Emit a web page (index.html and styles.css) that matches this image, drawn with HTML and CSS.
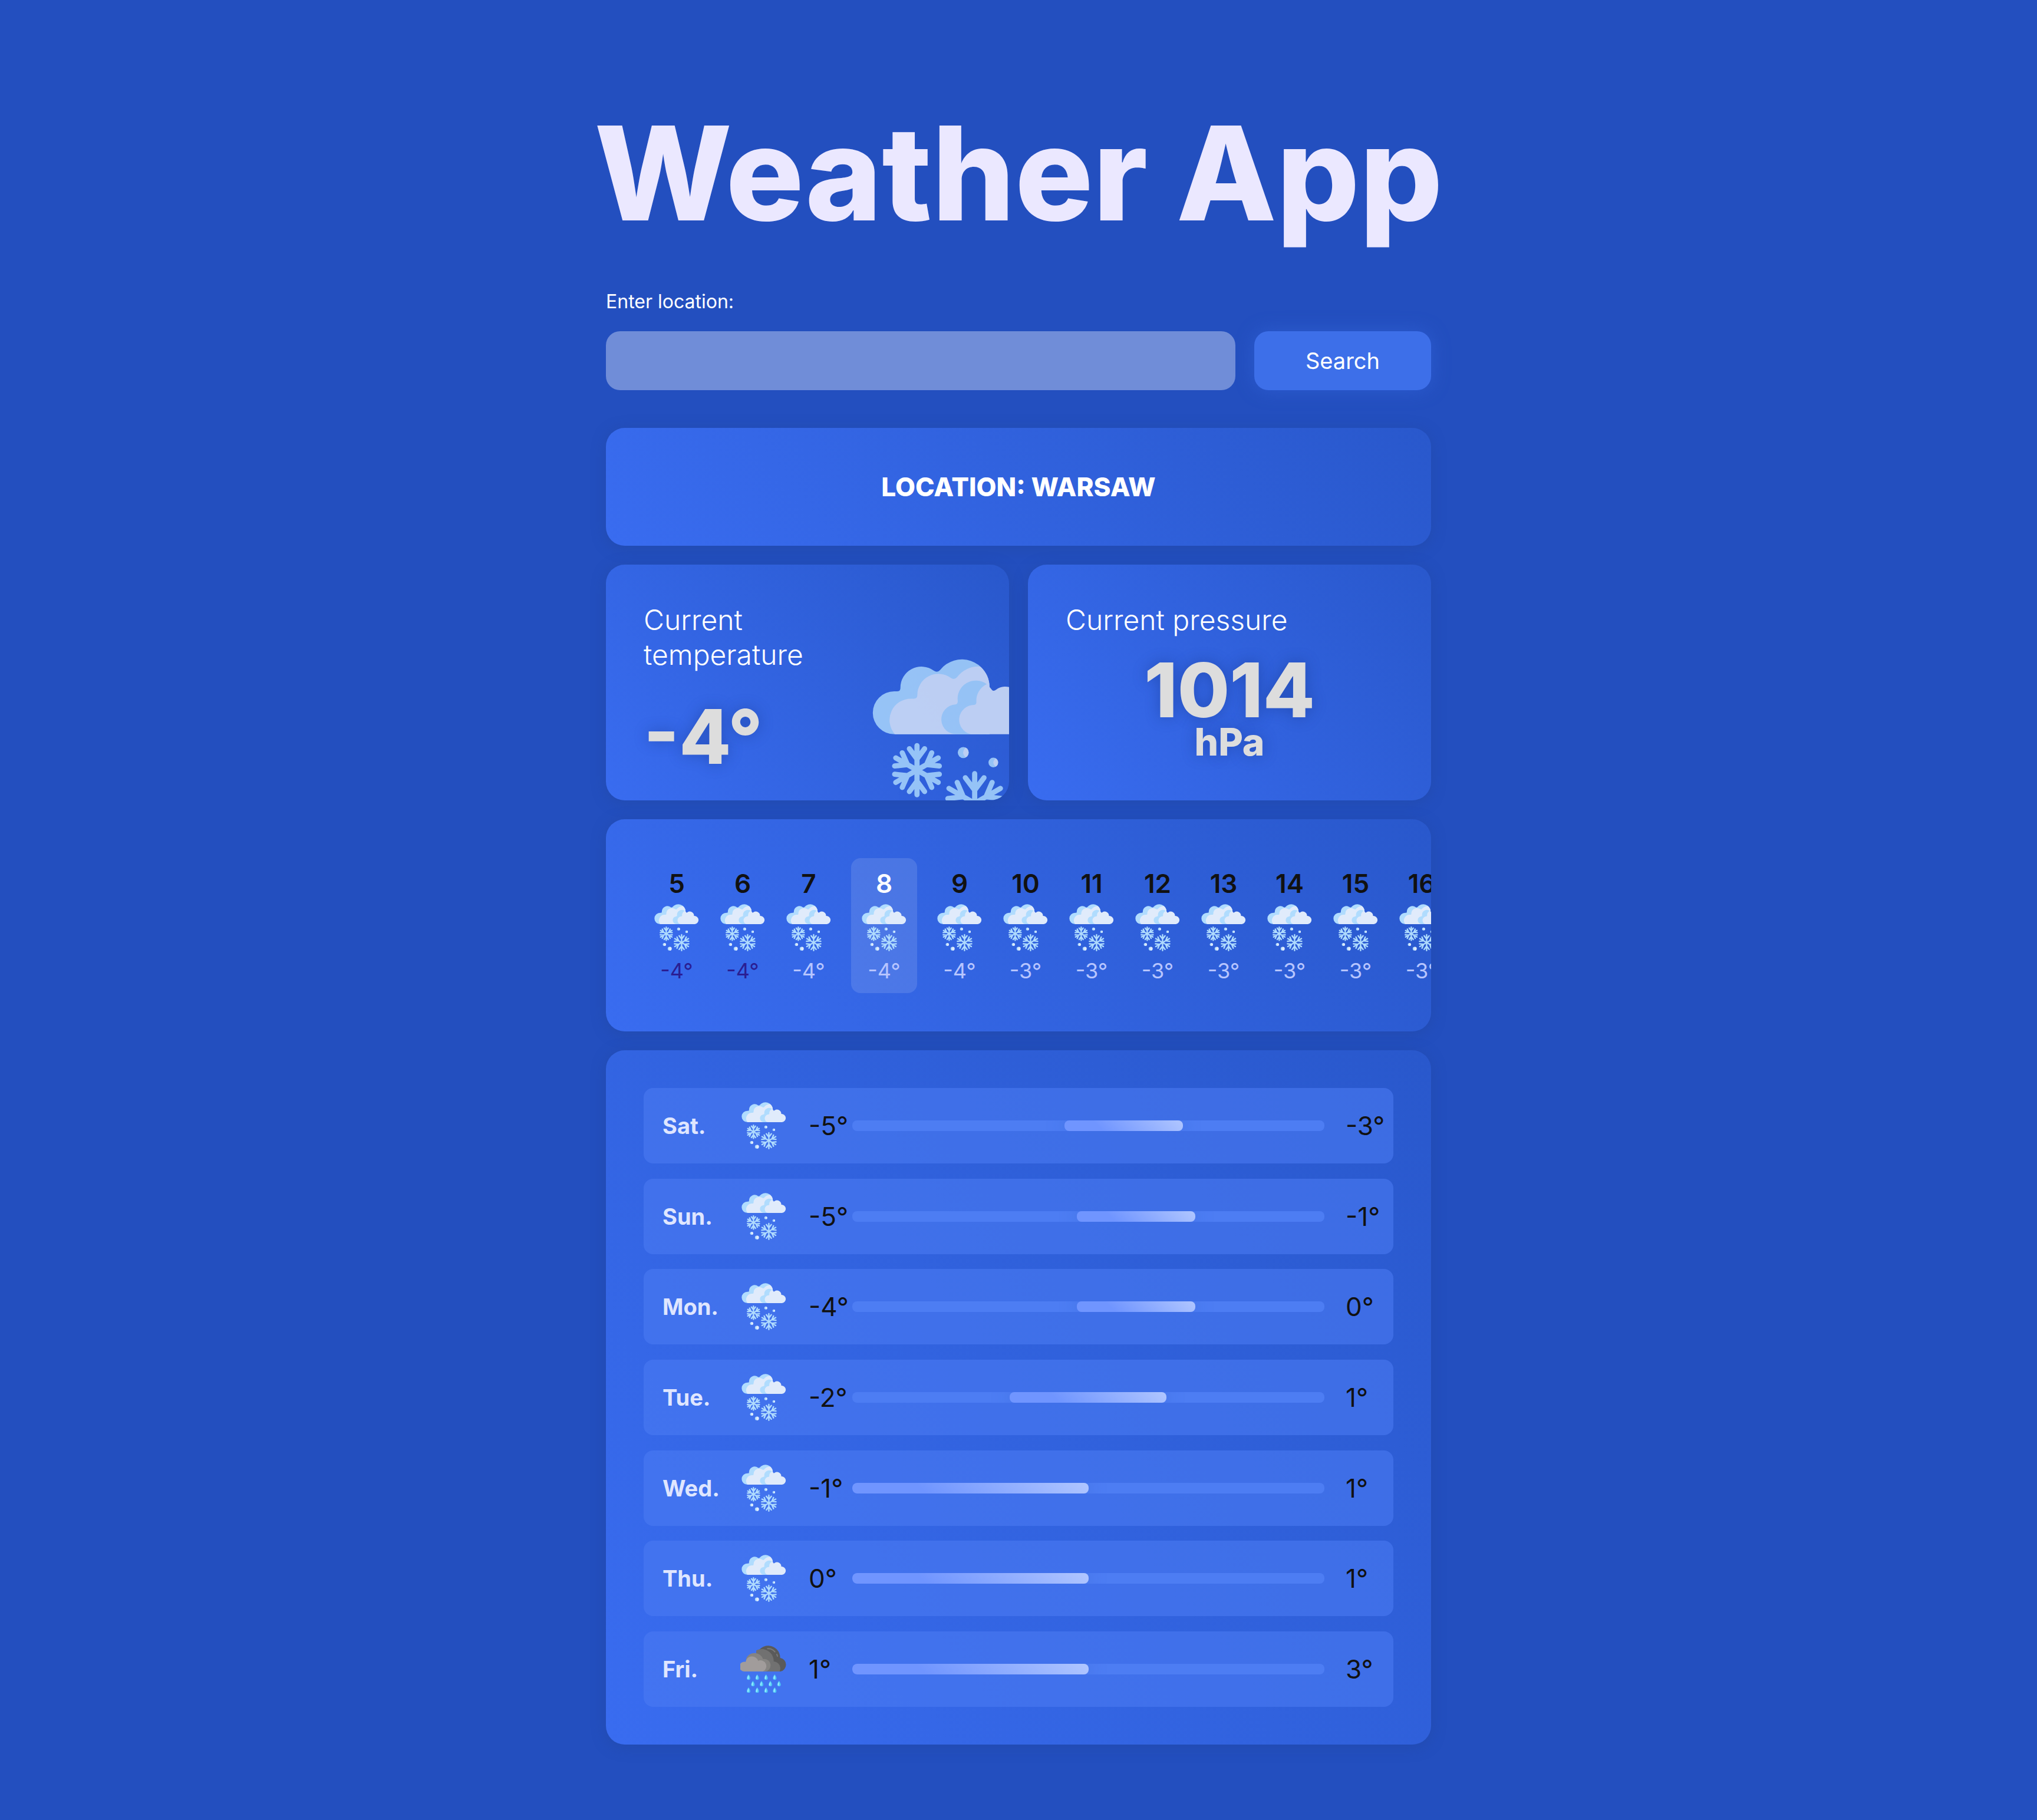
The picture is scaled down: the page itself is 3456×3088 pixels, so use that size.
FILE: index.html
```html
<!DOCTYPE html>
<html lang="en">
<head>
<meta charset="utf-8">
<meta name="viewport" content="width=device-width, initial-scale=1">
<title>Weather App</title>
<link rel="stylesheet" href="styles.css">
</head>
<body>
<svg class="sprite" aria-hidden="true">
  <symbol id="snow" viewBox="0 0 512 512">
    <path fill="#b0dcfe" d="M77 218A62 62 0 0 1 77 94H85Q95 94 95 84A61 61 0 0 1 192 34Q202 41 210 32A80 80 0 0 1 353 82V218Z"/>
    <path fill="#e0ebfb" d="M79 218A62 62 0 0 1 126 115H134Q144 115 144 105A61 61 0 0 1 241 55Q251 62 259 53A77 77 0 0 1 326 22A80 80 0 0 1 353 82V218Z"/>
    <path fill="#b0dcfe" d="M259 218A43 43 0 0 1 254 132Q261 131 261 123A53 53 0 0 1 345 73L353 82V218Z"/>
    <path fill="#e0ebfb" d="M299 218A43 43 0 0 1 309 133Q315 132 315 125A53 53 0 0 1 345 73L353 81L361 91Q366 94 372 89A46 46 0 0 1 445 128A45 45 0 1 1 452 218Z"/>
    <g fill="none" stroke="#b0dcfe" stroke-width="15" stroke-linecap="round">
      <g transform="translate(143 322)">
        <path d="M0 0V-71M-22-62L0-32L22-62"/>
        <path transform="rotate(60)" d="M0 0V-71M-22-62L0-32L22-62"/>
        <path transform="rotate(120)" d="M0 0V-71M-22-62L0-32L22-62"/>
        <path transform="rotate(180)" d="M0 0V-71M-22-62L0-32L22-62"/>
        <path transform="rotate(240)" d="M0 0V-71M-22-62L0-32L22-62"/>
        <path transform="rotate(300)" d="M0 0V-71M-22-62L0-32L22-62"/>
      </g>
      <g transform="translate(310 418)">
        <path d="M0 0V-86M-27-74L0-38L27-74"/>
        <path transform="rotate(60)" d="M0 0V-86M-27-74L0-38L27-74"/>
        <path transform="rotate(120)" d="M0 0V-86M-27-74L0-38L27-74"/>
        <path transform="rotate(180)" d="M0 0V-86M-27-74L0-38L27-74"/>
        <path transform="rotate(240)" d="M0 0V-86M-27-74L0-38L27-74"/>
        <path transform="rotate(300)" d="M0 0V-86M-27-74L0-38L27-74"/>
      </g>
    </g>
    <g fill="#b0dcfe">
      <circle cx="277" cy="271" r="16"/><circle cx="364" cy="300" r="14"/>
      <circle cx="122" cy="439" r="16"/><circle cx="179" cy="484" r="20"/>
    </g>
    <g fill="#e0ebfb">
      <path d="M284 257A16 16 0 0 1 284 285Q269 271 284 257Z"/>
      <path d="M371 288A14 14 0 0 1 371 312Q357 300 371 288Z"/>
      <path d="M125 423A16 16 0 0 1 125 455Q109 439 125 423Z"/>
      <path d="M183 464A20 20 0 0 1 183 504Q162 484 183 464Z"/>
    </g>
  </symbol>
  <symbol id="rain" viewBox="48 66 240 240">
    <path fill="#5a5a5a" d="M129 127A61 61 0 0 1 251 129A35 35 0 0 1 252 198H129Z"/>
    <path fill="#717171" d="M129 91A61 61 0 0 1 218 147A35 35 0 0 1 248 198H129Z"/>
    <path fill="#868482" d="M79 130A46 46 0 0 1 164 135A31 31 0 0 1 176 198H72Z"/>
    <path fill="#a19c9b" d="M72 198A25 25 0 1 1 75 149A33 33 0 0 1 139 144A29 29 0 0 1 163 198Z"/>
    <path fill="none" stroke="#7a7a7a" stroke-width="6" stroke-linecap="round" d="M187 82Q209 80 224 98M234 111L237 120"/>
    <g id="drops-top">
      <path fill="#4fc8f5" d="M90 213C84 220 81 227 81 232A9 9 0 0 0 99 232C99 227 96 220 90 213ZM134 213C128 220 125 227 125 232A9 9 0 0 0 143 232C143 227 140 220 134 213ZM179 213C173 220 170 227 170 232A9 9 0 0 0 188 232C188 227 185 220 179 213ZM223 213C217 220 214 227 214 232A9 9 0 0 0 232 232C232 227 229 220 223 213Z"/>
      <path fill="#98e8ff" d="M89 217Q83 228 84 234Q86 238 90 237Q94 226 89 217ZM133 217Q127 228 128 234Q130 238 134 237Q138 226 133 217ZM178 217Q172 228 173 234Q175 238 179 237Q183 226 178 217ZM222 217Q216 228 217 234Q219 238 223 237Q227 226 222 217Z"/>
    </g>
    <use href="#drops-top" x="22" y="33"/>
    <use href="#drops-top" y="66"/>
  </symbol>
</svg>

<h1 class="title">Weather App</h1>

<main class="app">
  <form class="search">
    <label class="search-label" for="location">Enter location:</label>
    <div class="search-row">
      <input class="search-input" id="location" name="location" type="text">
      <button class="search-button" type="button">Search</button>
    </div>
  </form>

  <div class="cards">
    <section class="card location">
      <h2 class="location-name">LOCATION: WARSAW</h2>
    </section>

    <div class="current">
      <section class="card reading temperature">
        <h2 class="reading-title">Current temperature</h2>
        <p class="value">-4°</p>
        <svg class="current-icon" role="img" aria-label="Snow"><use href="#snow"/></svg>
      </section>
      <section class="card reading">
        <h2 class="reading-title">Current pressure</h2>
        <p class="pressure"><span class="value">1014</span><span class="unit">hPa</span></p>
      </section>
    </div>

    <section class="card hourly" aria-label="Hourly forecast">
      <ol class="hours">
        <li class="hour"><span class="hour-time">5</span><svg class="icon"><use href="#snow"/></svg><span class="hour-temp cold">-4°</span></li>
        <li class="hour"><span class="hour-time">6</span><svg class="icon"><use href="#snow"/></svg><span class="hour-temp cold">-4°</span></li>
        <li class="hour"><span class="hour-time">7</span><svg class="icon"><use href="#snow"/></svg><span class="hour-temp">-4°</span></li>
        <li class="hour now"><span class="hour-time">8</span><svg class="icon"><use href="#snow"/></svg><span class="hour-temp">-4°</span></li>
        <li class="hour"><span class="hour-time">9</span><svg class="icon"><use href="#snow"/></svg><span class="hour-temp">-4°</span></li>
        <li class="hour"><span class="hour-time">10</span><svg class="icon"><use href="#snow"/></svg><span class="hour-temp">-3°</span></li>
        <li class="hour"><span class="hour-time">11</span><svg class="icon"><use href="#snow"/></svg><span class="hour-temp">-3°</span></li>
        <li class="hour"><span class="hour-time">12</span><svg class="icon"><use href="#snow"/></svg><span class="hour-temp">-3°</span></li>
        <li class="hour"><span class="hour-time">13</span><svg class="icon"><use href="#snow"/></svg><span class="hour-temp">-3°</span></li>
        <li class="hour"><span class="hour-time">14</span><svg class="icon"><use href="#snow"/></svg><span class="hour-temp">-3°</span></li>
        <li class="hour"><span class="hour-time">15</span><svg class="icon"><use href="#snow"/></svg><span class="hour-temp">-3°</span></li>
        <li class="hour"><span class="hour-time">16</span><svg class="icon"><use href="#snow"/></svg><span class="hour-temp">-3°</span></li>
      </ol>
    </section>

    <section class="card daily" aria-label="Daily forecast">
      <ol class="days">
        <li class="day"><span class="day-name">Sat.</span><svg class="icon"><use href="#snow"/></svg><span class="degrees">-5°</span><div class="range"><div class="range-fill" style="margin-left:45%;width:25%"></div></div><span class="degrees">-3°</span></li>
        <li class="day"><span class="day-name">Sun.</span><svg class="icon"><use href="#snow"/></svg><span class="degrees">-5°</span><div class="range"><div class="range-fill" style="margin-left:47.6%;width:25%"></div></div><span class="degrees">-1°</span></li>
        <li class="day"><span class="day-name">Mon.</span><svg class="icon"><use href="#snow"/></svg><span class="degrees">-4°</span><div class="range"><div class="range-fill" style="margin-left:47.6%;width:25%"></div></div><span class="degrees">0°</span></li>
        <li class="day"><span class="day-name">Tue.</span><svg class="icon"><use href="#snow"/></svg><span class="degrees">-2°</span><div class="range"><div class="range-fill" style="margin-left:33.3%;width:33.3%"></div></div><span class="degrees">1°</span></li>
        <li class="day"><span class="day-name">Wed.</span><svg class="icon"><use href="#snow"/></svg><span class="degrees">-1°</span><div class="range"><div class="range-fill" style="margin-left:0%;width:50%"></div></div><span class="degrees">1°</span></li>
        <li class="day"><span class="day-name">Thu.</span><svg class="icon"><use href="#snow"/></svg><span class="degrees">0°</span><div class="range"><div class="range-fill" style="margin-left:0%;width:50%"></div></div><span class="degrees">1°</span></li>
        <li class="day"><span class="day-name">Fri.</span><svg class="icon"><use href="#rain"/></svg><span class="degrees">1°</span><div class="range"><div class="range-fill" style="margin-left:0%;width:50%"></div></div><span class="degrees">3°</span></li>
      </ol>
    </section>
  </div>
</main>
</body>
</html>
```
FILE: styles.css
```css
*, *::before, *::after {
  box-sizing: border-box;
}

body {
  margin: 0;
  padding: 160px 32px 128px;
  background: #234fbf;
  color: #111;
  font-family: Inter, "Liberation Sans", sans-serif;
}

h1, h2, p, ol {
  margin: 0;
  padding: 0;
}

ol {
  list-style: none;
}

.sprite {
  position: absolute;
  width: 0;
  height: 0;
}

.title {
  margin-bottom: 64px;
  color: #ebe8ff;
  font-size: 221px;
  font-weight: 800;
  line-height: 268px;
  text-align: center;
}

.app {
  max-width: 1400px;
  margin: 0 auto;
}

/* Search */

.search {
  margin-bottom: 64px;
}

.search-label {
  display: block;
  margin-bottom: 30px;
  color: #fff;
  font-size: 32px;
  line-height: 40px;
}

.search-row {
  display: flex;
  gap: 32px;
}

.search-input,
.search-button {
  height: 100px;
  border: 0;
  border-radius: 24px;
  color: #fff;
  font: 400 38px/48px Inter, "Liberation Sans", sans-serif;
}

.search-input {
  flex: 1;
  min-width: 0;
  padding: 0 32px;
  background: #708dd8;
}

.search-button {
  flex: 0 0 300px;
  background: #3d6fe9;
  box-shadow: 0 0 32px rgba(61, 111, 233, 0.4);
}

/* Cards */

.cards {
  display: flex;
  flex-direction: column;
  gap: 32px;
}

.card {
  overflow: hidden;
  padding: 64px;
  border-radius: 32px;
  background: linear-gradient(52deg, #396cf0, #2958cc);
  box-shadow: 0 4px 24px rgba(35, 68, 145, 0.35);
}

.location-name {
  color: #fff;
  font-size: 44px;
  font-weight: 800;
  line-height: 72px;
  text-align: center;
}

.current {
  display: grid;
  grid-template-columns: 1fr 1fr;
  gap: 32px;
}

.reading {
  min-height: 400px;
}

.temperature {
  position: relative;
  display: flex;
  flex-direction: column;
  justify-content: space-between;
}

.temperature .reading-title {
  width: 60%;
}

.reading-title {
  color: #fff;
  font-size: 48px;
  font-weight: 300;
  line-height: 59px;
}

.value,
.unit {
  color: #ddd;
  font-weight: 800;
  text-shadow: 0 0 24px rgba(20, 50, 130, 0.4);
}

.value {
  font-size: 128px;
  line-height: 88px;
}

.unit {
  font-size: 64px;
  line-height: 64px;
}

.pressure {
  display: flex;
  flex-direction: column;
  align-items: center;
  gap: 12px;
  margin-top: 46px;
}

.current-icon {
  position: absolute;
  right: -60px;
  bottom: -60px;
  width: 300px;
  height: 300px;
  opacity: 0.8;
}

.icon {
  flex: none;
  width: 80px;
  height: 80px;
}

/* Hourly forecast */

.hourly {
  padding: 66px 64px 65px;
}

.hours {
  display: flex;
}

.hour {
  display: flex;
  flex: 0 0 112px;
  flex-direction: column;
  align-items: center;
  gap: 11px;
  padding: 19px 16px 16px;
  border-radius: 16px;
}

.hour-time {
  font-size: 44px;
  font-weight: 600;
  line-height: 48px;
}

.hour-temp {
  color: #b7c5ff;
  font-size: 36px;
  line-height: 44px;
}

.hour-temp.cold {
  color: #2a1e93;
}

.now {
  margin: 0 16px;
  background: rgba(255, 255, 255, 0.12);
}

.now .hour-time {
  color: #fff;
}

/* Daily forecast */

.days {
  display: flex;
  flex-direction: column;
  justify-content: space-between;
  min-height: 1050px;
}

.day {
  display: grid;
  grid-template-columns: 100px 80px 46px 1fr 53px;
  align-items: center;
  gap: 32px;
  min-height: 128px;
  padding: 0 32px;
  border-radius: 16px;
  background: rgba(76, 123, 243, 0.57);
  font-size: 44px;
  line-height: 48px;
  white-space: nowrap;
}

.day-name {
  color: #dfe6ff;
  font-size: 38px;
  font-weight: 700;
}

.degrees {
  padding-left: 4px;
}

.range {
  overflow: hidden;
  height: 18px;
  border-radius: 8px;
  background: #4d7df3;
}

.range-fill {
  height: 18px;
  border-radius: 8px;
  background: linear-gradient(45deg, #7095ff 30%, #b0c6ff);
  box-shadow: 0 0 32px rgba(35, 79, 191, 0.35);
}
```
